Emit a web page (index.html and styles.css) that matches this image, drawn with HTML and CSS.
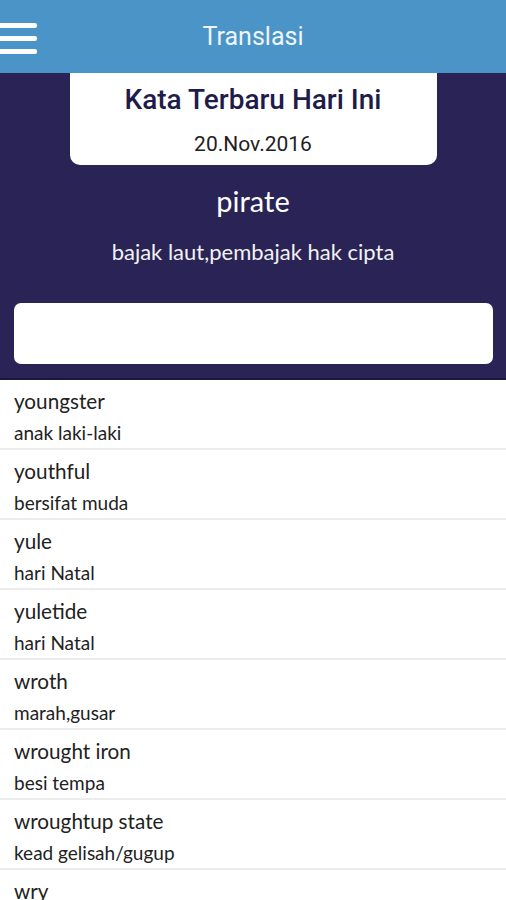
FILE: index.html
```html
<!DOCTYPE html>
<html lang="id">

<head>
  <meta charset="UTF-8">
  <meta name="viewport" content="width=device-width, initial-scale=1.0">
  <title>Translasi</title>
  <link rel="stylesheet" href="styles.css">
</head>

<body>
  <div class="header">
    <div class="menu-btn">
      <span></span>
      <span></span>
      <span></span>
    </div>
    <div class="header-title">Translasi</div>
  </div>

  <div class="today">
    <div class="today-card">
      <div class="today-title">Kata Terbaru Hari Ini</div>
      <div class="today-date">20.Nov.2016</div>
    </div>
    <div class="today-word">pirate</div>
    <div class="today-mean">bajak laut,pembajak hak cipta</div>
    <input class="search" type="text">
  </div>

  <ul class="word-list">
    <li class="word-item">
      <div class="word">youngster</div>
      <div class="mean">anak laki-laki</div>
    </li>
    <li class="word-item">
      <div class="word">youthful</div>
      <div class="mean">bersifat muda</div>
    </li>
    <li class="word-item">
      <div class="word">yule</div>
      <div class="mean">hari Natal</div>
    </li>
    <li class="word-item">
      <div class="word">yuletide</div>
      <div class="mean">hari Natal</div>
    </li>
    <li class="word-item">
      <div class="word">wroth</div>
      <div class="mean">marah,gusar</div>
    </li>
    <li class="word-item">
      <div class="word">wrought iron</div>
      <div class="mean">besi tempa</div>
    </li>
    <li class="word-item">
      <div class="word">wroughtup state</div>
      <div class="mean">kead gelisah/gugup</div>
    </li>
    <li class="word-item">
      <div class="word">wry</div>
      <div class="mean">miring</div>
    </li>
  </ul>
</body>

</html>
```

FILE: styles.css
```css
* {
  margin: 0;
  padding: 0;
  box-sizing: border-box;
}

html,
body {
  height: 100%;
  overflow: hidden;
}

body {
  background-color: #fff;
  font-family: Lato, "Open Sans", sans-serif;
}

/* 顶部栏 */
.header {
  height: 73px;
  background-color: #4b94c7;
  display: flex;
  align-items: center;
  justify-content: center;
  position: relative;
}

.menu-btn {
  position: absolute;
  left: 0;
  top: 23px;
  width: 37px;
  display: flex;
  flex-direction: column;
  gap: 8px;
}

.menu-btn span {
  display: block;
  height: 5px;
  background-color: #fff;
  border-radius: 0 2px 2px 0;
}

.header-title {
  font-family: Roboto, sans-serif;
  font-size: 25px;
  color: #eef5fb;
}

/* 今日单词 */
.today {
  background-color: #2a2456;
  border-bottom: 2px solid #1c1740;
  display: flex;
  flex-direction: column;
  align-items: center;
  padding-bottom: 14px;
}

.today-card {
  width: 367px;
  height: 92px;
  background-color: #fff;
  border-radius: 0 0 10px 10px;
  text-align: center;
  font-family: Roboto, sans-serif;
  padding-top: 10px;
}

.today-title {
  font-size: 28px;
  font-weight: 500;
  color: #1f1b4b;
  line-height: 34px;
}

.today-date {
  font-size: 21px;
  color: #222;
  line-height: 26px;
  margin-top: 14px;
}

.today-word {
  font-size: 29px;
  color: #fff;
  line-height: 36px;
  margin-top: 18px;
}

.today-mean {
  font-size: 22px;
  color: #f2f2f2;
  line-height: 30px;
  margin-top: 18px;
}

.search {
  width: 479px;
  height: 61px;
  margin-top: 36px;
  border: none;
  border-radius: 7px;
  background-color: #fff;
  outline: none;
}

/* 单词列表 */
.word-list {
  list-style: none;
}

.word-item {
  height: 70px;
  padding: 6px 14px 0;
  border-bottom: 2px solid #ececec;
  color: #222;
}

.word {
  font-size: 20.7px;
  line-height: 31px;
}

.mean {
  font-size: 19px;
  line-height: 32px;
}
```
